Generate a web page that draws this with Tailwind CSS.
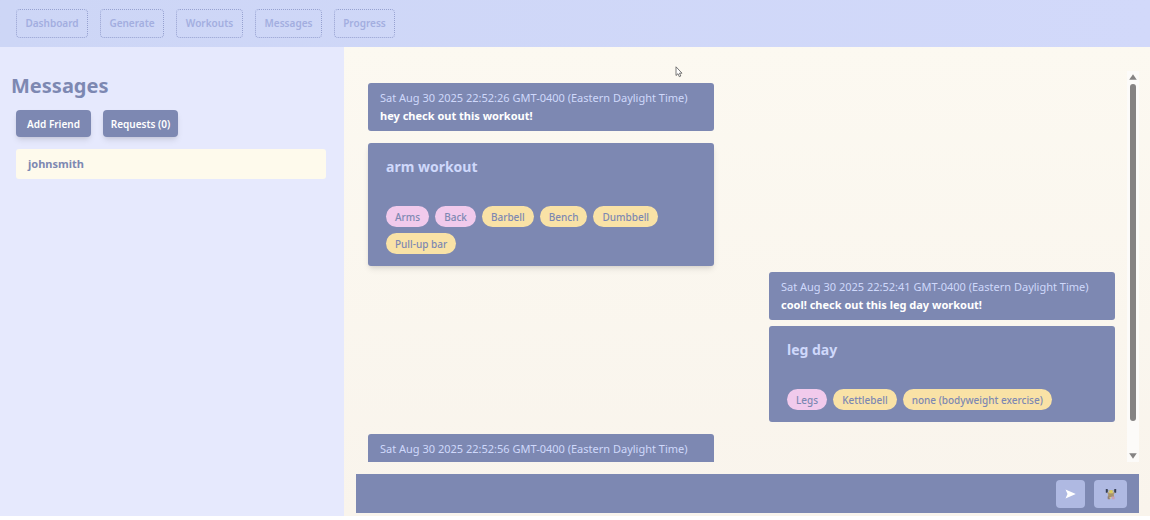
<!DOCTYPE html>
<html lang="en">
<head>
<meta charset="utf-8">
<meta name="viewport" content="width=device-width, initial-scale=1">
<title>Messages</title>
<script src="https://cdn.jsdelivr.net/npm/@tailwindcss/browser@4"></script>
</head>
<body class="h-screen flex flex-col overflow-hidden bg-white pb-1 font-['Segoe_UI','Noto_Sans',sans-serif] text-[#7d88b2]">
  <header class="shrink-0 bg-linear-to-r from-[#cdd6f6] to-[#d2d9fa] px-4 py-[9px]">
    <nav class="flex items-start gap-3 text-[10px] font-semibold text-[#a3aee0]">
      <a href="#" class="flex h-[29px] w-[72px] items-center justify-center rounded border border-dotted border-[#96a1d0]">Dashboard</a>
      <a href="#" class="flex h-[29px] w-16 items-center justify-center rounded border border-dotted border-[#96a1d0]">Generate</a>
      <a href="#" class="flex h-[29px] w-[67px] items-center justify-center rounded border border-dotted border-[#96a1d0]">Workouts</a>
      <a href="#" class="flex h-[29px] w-[67px] items-center justify-center rounded border border-dotted border-[#96a1d0]">Messages</a>
      <a href="#" class="flex h-[29px] w-[61px] items-center justify-center rounded border border-dotted border-[#96a1d0]">Progress</a>
    </nav>
  </header>
  <div class="flex min-h-0 flex-1">
    <aside class="w-[344px] shrink-0 bg-[#e6e9fd] pt-6">
      <h1 class="pl-[11px] text-xl leading-[30px] font-bold">Messages</h1>
      <div class="mt-[9px] flex gap-3 pl-4 text-[10px] font-semibold text-white">
        <button type="button" class="h-[27px] w-[75px] rounded bg-[#7d88b2] pt-px shadow-md">Add Friend</button>
        <button type="button" class="h-[27px] w-[75px] rounded bg-[#7d88b2] pt-px shadow-md">Requests (0)</button>
      </div>
      <a href="#" class="mt-3 mr-[18px] ml-4 block rounded-[3px] bg-[#fefaec] px-3 text-[11px] leading-[30px] font-bold">johnsmith</a>
    </aside>
    <main class="flex min-w-0 flex-1 flex-col bg-linear-to-b from-[#fcf9f1] to-[#f9f4ec] pt-6 pr-[11px] pb-[3px] pl-3">
      <div class="flex min-h-0 flex-1">
        <section aria-label="Conversation" class="flex min-w-0 flex-1 flex-col overflow-hidden px-3 pt-3">
          <article class="w-[346px] shrink-0 rounded-[3px] bg-[#7d88b2] px-3 py-[6px] text-[11px] leading-[18px]">
            <p class="whitespace-nowrap text-[#cfd8fb]">Sat Aug 30 2025 22:52:26 GMT-0400 (Eastern Daylight Time)</p>
            <p class="font-bold text-white">hey check out this workout!</p>
          </article>
          <article class="mt-3 w-[346px] shrink-0 rounded-[3px] bg-[#7d88b2] px-[18px] py-3 shadow-md">
            <h2 class="text-sm leading-6 font-bold text-[#cfd8fb]">arm workout</h2>
            <ul class="mt-[27px] flex flex-wrap gap-[6px] text-[10px] leading-5 font-medium">
              <li class="rounded-full bg-[#f1caec] px-[9px] pt-px">Arms</li>
              <li class="rounded-full bg-[#f1caec] px-[9px] pt-px">Back</li>
              <li class="rounded-full bg-[#f9e2a6] px-[9px] pt-px">Barbell</li>
              <li class="rounded-full bg-[#f9e2a6] px-[9px] pt-px">Bench</li>
              <li class="rounded-full bg-[#f9e2a6] px-[9px] pt-px">Dumbbell</li>
              <li class="rounded-full bg-[#f9e2a6] px-[9px] pt-px">Pull-up bar</li>
            </ul>
          </article>
          <article class="mt-[6px] w-[346px] shrink-0 self-end rounded-[3px] bg-[#7d88b2] px-3 py-[6px] text-[11px] leading-[18px]">
            <p class="whitespace-nowrap text-[#cfd8fb]">Sat Aug 30 2025 22:52:41 GMT-0400 (Eastern Daylight Time)</p>
            <p class="font-bold text-white">cool! check out this leg day workout!</p>
          </article>
          <article class="mt-[6px] w-[346px] shrink-0 self-end rounded-[3px] bg-[#7d88b2] px-[18px] py-3">
            <h2 class="text-sm leading-6 font-bold text-[#cfd8fb]">leg day</h2>
            <ul class="mt-[27px] flex flex-wrap gap-[6px] text-[10px] leading-5 font-medium">
              <li class="rounded-full bg-[#f1caec] px-[9px] pt-px">Legs</li>
              <li class="rounded-full bg-[#f9e2a6] px-[9px] pt-px">Kettlebell</li>
              <li class="rounded-full bg-[#f9e2a6] px-[9px] pt-px">none (bodyweight exercise)</li>
            </ul>
          </article>
          <article class="mt-3 h-12 w-[346px] shrink-0 rounded-[3px] bg-[#7d88b2] px-3 py-[6px] text-[11px] leading-[18px]">
            <p class="whitespace-nowrap text-[#cfd8fb]">Sat Aug 30 2025 22:52:56 GMT-0400 (Eastern Daylight Time)</p>
          </article>
        </section>
        <div aria-hidden="true" class="flex w-3 shrink-0 flex-col items-center bg-[#fcfbf9] py-[3px]">
          <svg class="h-[6px] w-2 shrink-0" viewBox="0 0 8 6" fill="#858383"><path d="M4 0.3 7.8 5.7H.2z"/></svg>
          <div class="mt-1 h-[337px] w-[6px] rounded-full bg-[#858383]"></div>
          <svg class="mt-auto h-[6px] w-2 shrink-0" viewBox="0 0 8 6" fill="#858383"><path d="M.2.3h7.6L4 5.7z"/></svg>
        </div>
      </div>
      <form class="mt-3 flex h-[39px] shrink-0 items-center bg-[#7d88b2] pr-3">
        <input type="text" aria-label="Message" class="h-full min-w-0 flex-1 bg-transparent px-3 text-[11px] text-white outline-none">
        <button type="button" aria-label="Send" class="flex h-7 w-[29px] items-center justify-center rounded bg-[#afb9e2]">
          <svg class="h-[10px] w-[11px]" viewBox="0 0 11 10" fill="#fff"><path d="M.5.5 10.800 5 .5 9.500 2.500 5z"/></svg>
        </button>
        <button type="button" aria-label="Share workout" class="ml-[9px] flex h-7 w-[33px] items-center justify-center rounded bg-[#afb9e2]">
          <svg class="h-3 w-3" viewBox="0 0 12 12"><path d="M2 2.800h8" stroke="#a5a58c" stroke-width=".8"/><rect x=".8" y="1" width="2" height="3.800" rx=".6" fill="#353d52"/><rect x="9.200" y="1" width="2" height="3.800" rx=".6" fill="#353d52"/><path d="M2.600 4.500 4.500 6h3l1.900-1.500" fill="none" stroke="#b5a06c" stroke-width="1.500"/><circle cx="6" cy="3.800" r="1.900" fill="#dccb57"/><path d="M3.300 5.600h5.400L9 9H3z" fill="#a8946c"/><path d="M2.500 8.500h3l-.5 2.800H2.800z" fill="#8f8078"/><path d="M6.500 8.500h3.200v2.800H7z" fill="#c9a0b4"/><path d="M4.500 9h1.500v1.500H4.500z" fill="#e1c778"/></svg>
        </button>
      </form>
    </main>
  </div>
  <svg aria-hidden="true" class="pointer-events-none absolute top-[66px] left-[675px] h-3 w-2" viewBox="0 0 8 12"><path d="M1 .8v8.700l2-1.800 1.300 3 1.500-.7-1.300-2.800H7z" fill="#fff" stroke="#555" stroke-width=".8"/></svg>
</body>
</html>
